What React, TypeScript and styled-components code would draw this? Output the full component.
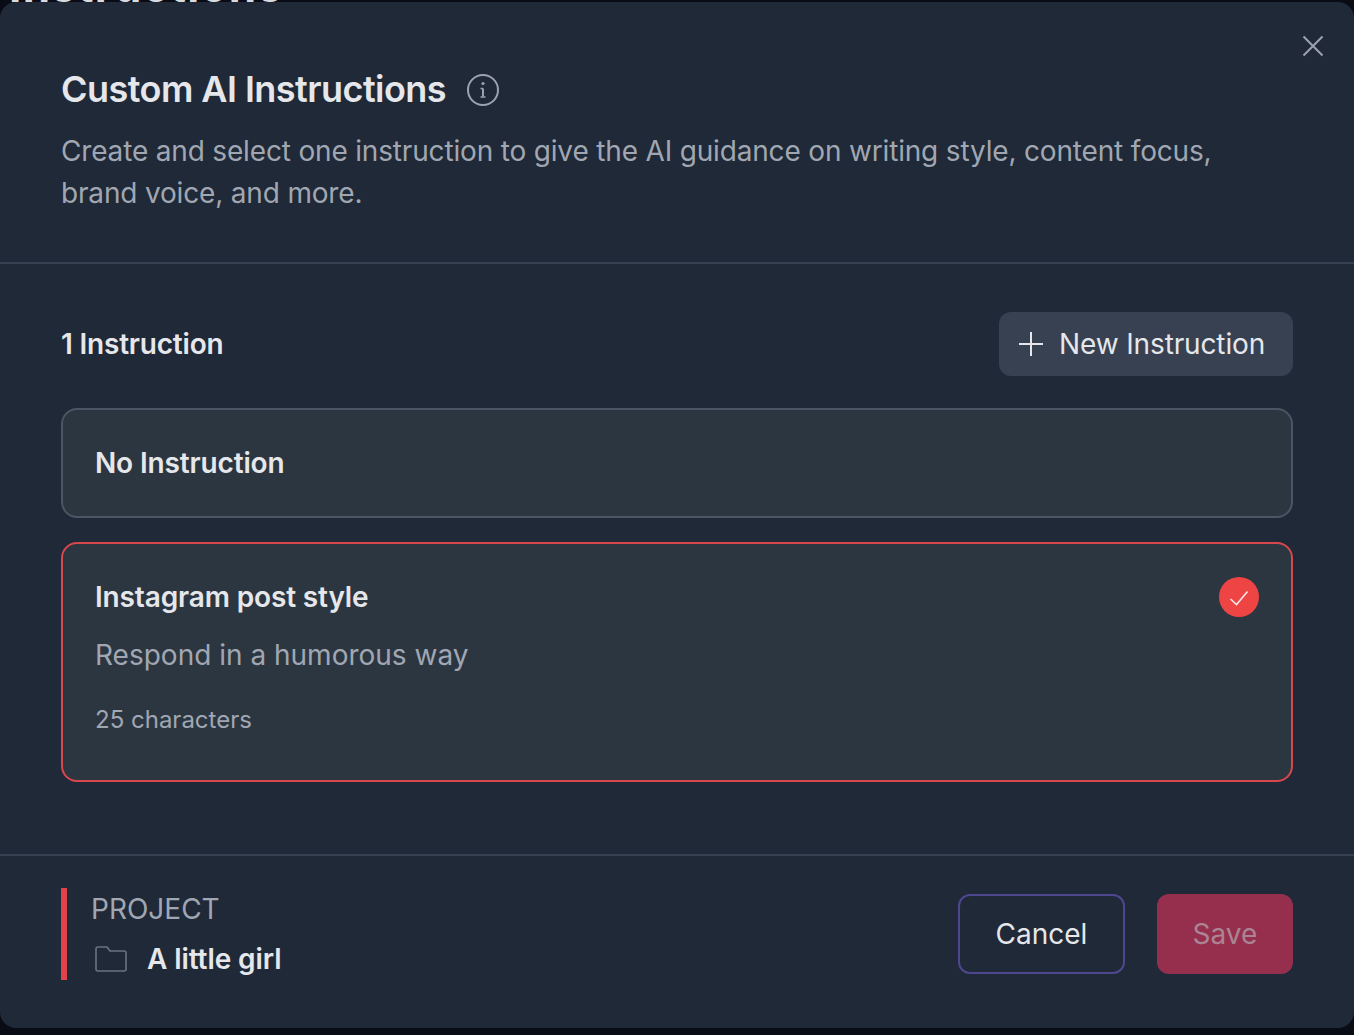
import React from "react";
import styled, { createGlobalStyle } from "styled-components";

const Global = createGlobalStyle`
  html, body { margin: 0; padding: 0; background: #090c14; }
  body { font-family: "Inter", "Liberation Sans", sans-serif; -webkit-font-smoothing: antialiased; }
  * { box-sizing: border-box; }
`;

const Page = styled.div`
  position: relative;
  width: 1354px;
  height: 1035px;
  overflow: hidden;
  padding-top: 2px;
`;

const BehindText = styled.div`
  position: absolute;
  left: 9px;
  top: -34px;
  font-size: 44px;
  line-height: 40px;
  font-weight: 700;
  color: #d8dbe0;
  letter-spacing: 1.3px;
`;

const Dialog = styled.div`
  position: relative;
  width: 1354px;
  height: 1026px;
  background: #1f2937;
  border-radius: 16px;
  display: flex;
  flex-direction: column;
`;

const CloseButton = styled.button`
  position: absolute;
  top: 28px;
  right: 25px;
  width: 32px;
  height: 32px;
  padding: 0;
  border: none;
  background: none;
  color: #9ca3af;
  display: flex;
  align-items: center;
  justify-content: center;
`;

const Header = styled.header`
  padding: 62px 61px 0;
  height: 262px;
  display: flex;
  flex-direction: column;
  border-bottom: 2px solid #374151;
`;

const TitleRow = styled.div`
  display: flex;
  align-items: center;
  gap: 21px;
  height: 50px;
`;

const Title = styled.h2`
  margin: 0;
  font-size: 36px;
  line-height: 50px;
  font-weight: 600;
  letter-spacing: -0.54px;
  color: #e5e7eb;
`;

const InfoIcon = styled.svg`
  width: 32px;
  height: 32px;
  margin-top: 2px;
`;

const Description = styled.p`
  margin: 16px 0 0;
  font-size: 28px;
  line-height: 42px;
  font-weight: 400;
  letter-spacing: -0.17px;
  color: #a1a7b2;
`;

const Body = styled.section`
  flex: 1;
  padding: 48px 61px 0;
  display: flex;
  flex-direction: column;
`;

const ListHeader = styled.div`
  display: flex;
  align-items: center;
  justify-content: space-between;
  height: 64px;
  margin-bottom: 32px;
`;

const CountLabel = styled.span`
  font-size: 28px;
  font-weight: 600;
  letter-spacing: -0.2px;
  color: #e5e7eb;
`;

const NewButton = styled.button`
  width: 294px;
  height: 64px;
  padding: 0 0 0 16px;
  border: none;
  border-radius: 12px;
  background: #374151;
  color: #e5e7eb;
  font-family: inherit;
  font-size: 28px;
  font-weight: 400;
  letter-spacing: -0.13px;
  display: flex;
  align-items: center;
  gap: 12px;
`;

const Card = styled.div<{ $selected?: boolean }>`
  position: relative;
  border-radius: 16px;
  background: #2c3641;
  border: 2px solid ${(p) => (p.$selected ? "#d9474c" : "#4b5563")};
  padding: ${(p) => (p.$selected ? "32px 32px" : "0 32px")};
  height: ${(p) => (p.$selected ? "240px" : "110px")};
  margin-bottom: 24px;
  display: flex;
  flex-direction: column;
  justify-content: ${(p) => (p.$selected ? "flex-start" : "center")};
`;

const CardTitle = styled.div`
  font-size: 28px;
  line-height: 42px;
  font-weight: 600;
  letter-spacing: -0.14px;
  color: #e5e7eb;
`;

const CardText = styled.div`
  margin-top: 16px;
  font-size: 28px;
  line-height: 42px;
  color: #a1a7b2;
`;

const CardMeta = styled.div`
  margin-top: 28px;
  font-size: 24px;
  line-height: 32px;
  color: #a1a7b2;
`;

const CheckBadge = styled.div`
  position: absolute;
  top: 33px;
  right: 32px;
  width: 40px;
  height: 40px;
  border-radius: 50%;
  background: #ef4444;
  display: flex;
  align-items: center;
  justify-content: center;
`;

const Footer = styled.footer`
  height: 174px;
  border-top: 2px solid #374151;
  padding: 32px 61px 0;
  display: flex;
  justify-content: space-between;
  align-items: flex-start;
`;

const ProjectInfo = styled.div`
  width: 400px;
  height: 92px;
  border-left: 6px solid #e0434a;
  padding-left: 24px;
  display: flex;
  flex-direction: column;
`;

const ProjectLabel = styled.div`
  font-size: 28px;
  line-height: 42px;
  color: #a1a7b2;
`;

const ProjectRow = styled.div`
  display: flex;
  align-items: center;
  gap: 20px;
  margin-top: 8px;
  padding-left: 4px;
`;

const ProjectName = styled.span`
  font-size: 28px;
  line-height: 42px;
  font-weight: 600;
  letter-spacing: -0.1px;
  color: #e5e7eb;
`;

const Actions = styled.div`
  display: flex;
  gap: 32px;
  margin-top: 6px;
`;

const CancelButton = styled.button`
  width: 167px;
  height: 80px;
  border: 2px solid #4f4690;
  border-radius: 12px;
  background: transparent;
  color: #e5e7eb;
  font-family: inherit;
  font-size: 28px;
  font-weight: 400;
`;

const SaveButton = styled.button`
  width: 136px;
  height: 80px;
  border: none;
  border-radius: 12px;
  background: #962f4e;
  color: #ab8494;
  font-family: inherit;
  font-size: 28px;
  font-weight: 400;
`;

export default function App() {
  return (
    <Page>
      <Global />
      <BehindText>Instructions</BehindText>
      <Dialog>
        <CloseButton aria-label="Close">
          <svg width="24" height="24" viewBox="0 0 24 24" fill="none" stroke="currentColor" strokeWidth="2">
            <path d="M2.5 2.5 21.5 21.5M21.5 2.5 2.5 21.5" />
          </svg>
        </CloseButton>
        <Header>
          <TitleRow>
            <Title>Custom AI Instructions</Title>
            <InfoIcon viewBox="0 0 32 32" fill="none" stroke="#9ca3af" strokeWidth="2">
              <circle cx="16" cy="16" r="15" />
              <path d="M16 14.5v8" />
              <circle cx="16" cy="9.5" r="1.6" fill="#9ca3af" stroke="none" />
              <path d="M13.5 14.5H16M13.5 23h5" strokeWidth="1.4" />
            </InfoIcon>
          </TitleRow>
          <Description>
            Create and select one instruction to give the AI guidance on writing style, content focus,
            <br />
            brand voice, and more.
          </Description>
        </Header>
        <Body>
          <ListHeader>
            <CountLabel>1 Instruction</CountLabel>
            <NewButton>
              <svg width="32" height="32" viewBox="0 0 32 32" fill="none" stroke="#e5e7eb" strokeWidth="2">
                <path d="M16 4v24M4 16h24" />
              </svg>
              New Instruction
            </NewButton>
          </ListHeader>
          <Card>
            <CardTitle>No Instruction</CardTitle>
          </Card>
          <Card $selected>
            <CardTitle>Instagram post style</CardTitle>
            <CardText>Respond in a humorous way</CardText>
            <CardMeta>25 characters</CardMeta>
            <CheckBadge>
              <svg width="20" height="20" viewBox="0 0 20 20" fill="none" stroke="#fde8e8" strokeWidth="1.6">
                <path d="M1.5 12 7.5 17.5 18.5 4.5" />
              </svg>
            </CheckBadge>
          </Card>
        </Body>
        <Footer>
          <ProjectInfo>
            <ProjectLabel>PROJECT</ProjectLabel>
            <ProjectRow>
              <svg width="32" height="26" viewBox="0 0 32 26" fill="none" stroke="#6b7280" strokeWidth="1.6" strokeLinejoin="round">
                <path d="M1 3a2 2 0 0 1 2-2h9l3 4h14a2 2 0 0 1 2 2v16a2 2 0 0 1-2 2H3a2 2 0 0 1-2-2z" />
              </svg>
              <ProjectName>A little girl</ProjectName>
            </ProjectRow>
          </ProjectInfo>
          <Actions>
            <CancelButton>Cancel</CancelButton>
            <SaveButton>Save</SaveButton>
          </Actions>
        </Footer>
      </Dialog>
    </Page>
  );
}
